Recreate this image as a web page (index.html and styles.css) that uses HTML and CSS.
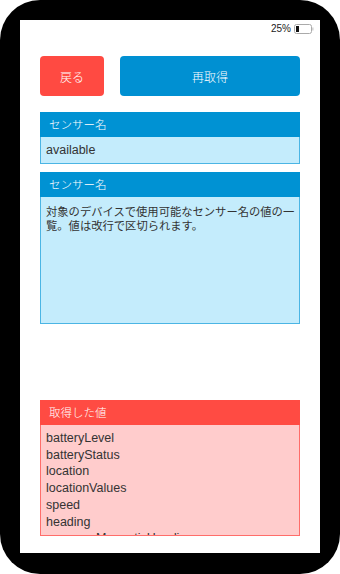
FILE: index.html
```html
<!DOCTYPE html>
<html lang="ja">
<head>
    <meta charset="UTF-8">
    <title>センサー名</title>
    <link rel="stylesheet" href="styles.css">
</head>
<body>

    <!--端末の枠-->
    <div class="device">
        <div class="screen">
            <div class="status">
                <span>25%</span>
                <svg class="battery" width="20" height="10" viewBox="0 0 20 10">
                    <rect x="0.5" y="0.5" width="17" height="9" rx="2" fill="none" stroke="#aaa"/>
                    <rect x="2" y="2" width="3" height="6" fill="#111"/>
                    <rect x="18.2" y="3.5" width="1.3" height="3" fill="#ccc"/>
                </svg>
            </div>

            <!--ボタン-->
            <div class="actions">
                <button class="btn btn-back">戻る</button>
                <button class="btn btn-reload">再取得</button>
            </div>

            <!--センサー名-->
            <div class="panel panel-blue">
                <div class="panel-head">センサー名</div>
                <div class="panel-body single">available</div>
            </div>

            <div class="panel panel-blue">
                <div class="panel-head">センサー名</div>
                <div class="panel-body desc">対象のデバイスで使用可能なセンサー名の値の一覧。値は改行で区切られます。</div>
            </div>

            <!--取得した値-->
            <div class="panel panel-red">
                <div class="panel-head">取得した値</div>
                <ul class="panel-body values">
                    <li>batteryLevel</li>
                    <li>batteryStatus</li>
                    <li>location</li>
                    <li>locationValues</li>
                    <li>speed</li>
                    <li>heading</li>
                    <li>compassMagneticHeading</li>
                    <li>compassTrueHeading</li>
                </ul>
            </div>
        </div>
    </div>

</body>
</html>
```

FILE: styles.css
```css
/*reset*/
body, ul, button {
    margin: 0;
    padding: 0;
}
ul {
    list-style: none;
}
body {
    background-color: #fff;
    font-family: "Liberation Sans", "Noto Sans CJK JP", sans-serif;
}

/*端末の枠*/
.device {
    width: 340px;
    height: 574px;
    padding: 20px;
    box-sizing: border-box;
    border-radius: 40px;
    background-color: #000;
}
.device .screen {
    height: 533px;
    padding: 0 20px;
    overflow: hidden;
    background-color: #fff;
}
.status {
    display: flex;
    justify-content: flex-end;
    align-items: center;
    gap: 3px;
    height: 17px;
    margin-right: -14px;
    font-size: 10px;
    color: #222;
}

/*ボタン*/
.actions {
    display: flex;
    gap: 16px;
    margin: 19px 0 16px;
}
.btn {
    height: 40px;
    border: 0;
    border-radius: 4px;
    color: #fff;
    font-family: "Noto Sans CJK JP", sans-serif;
    font-size: 12px;
    font-weight: 300;
}
.btn-back {
    width: 64px;
    background-color: #ff4a42;
}
.btn-reload {
    flex: 1;
    background-color: #0090d2;
}

/*パネル*/
.panel {
    margin-bottom: 8px;
}
.panel-head {
    height: 25px;
    padding-left: 9px;
    line-height: 25px;
    color: #fff;
    font-family: "Noto Sans CJK JP", sans-serif;
    font-size: 11.5px;
    font-weight: 300;
}
.panel-body {
    box-sizing: border-box;
    padding: 0 5px;
    border: 1px solid;
    border-top: 0;
    color: #333;
}
.panel-blue .panel-head {
    background-color: #0092d3;
}
.panel-blue .panel-body {
    border-color: #4bb5e4;
    background-color: #c4ecfc;
}
.panel-red .panel-head {
    background-color: #ff4b43;
}
.panel-red .panel-body {
    border-color: #ff6d6a;
    background-color: #ffcccc;
}
.panel-body.single {
    height: 27px;
    line-height: 26px;
    font-size: 12.5px;
}
.panel-body.desc {
    height: 127px;
    padding: 8px 2px 0 5px;
    line-height: 13.5px;
    font-family: "Noto Sans CJK JP", sans-serif;
    font-size: 11.3px;
}
.panel-red {
    margin-top: 76px;
}
.panel-body.values {
    height: 111px;
    padding-top: 5px;
    overflow: hidden;
    font-size: 12.5px;
    line-height: 16.7px;
}
```
